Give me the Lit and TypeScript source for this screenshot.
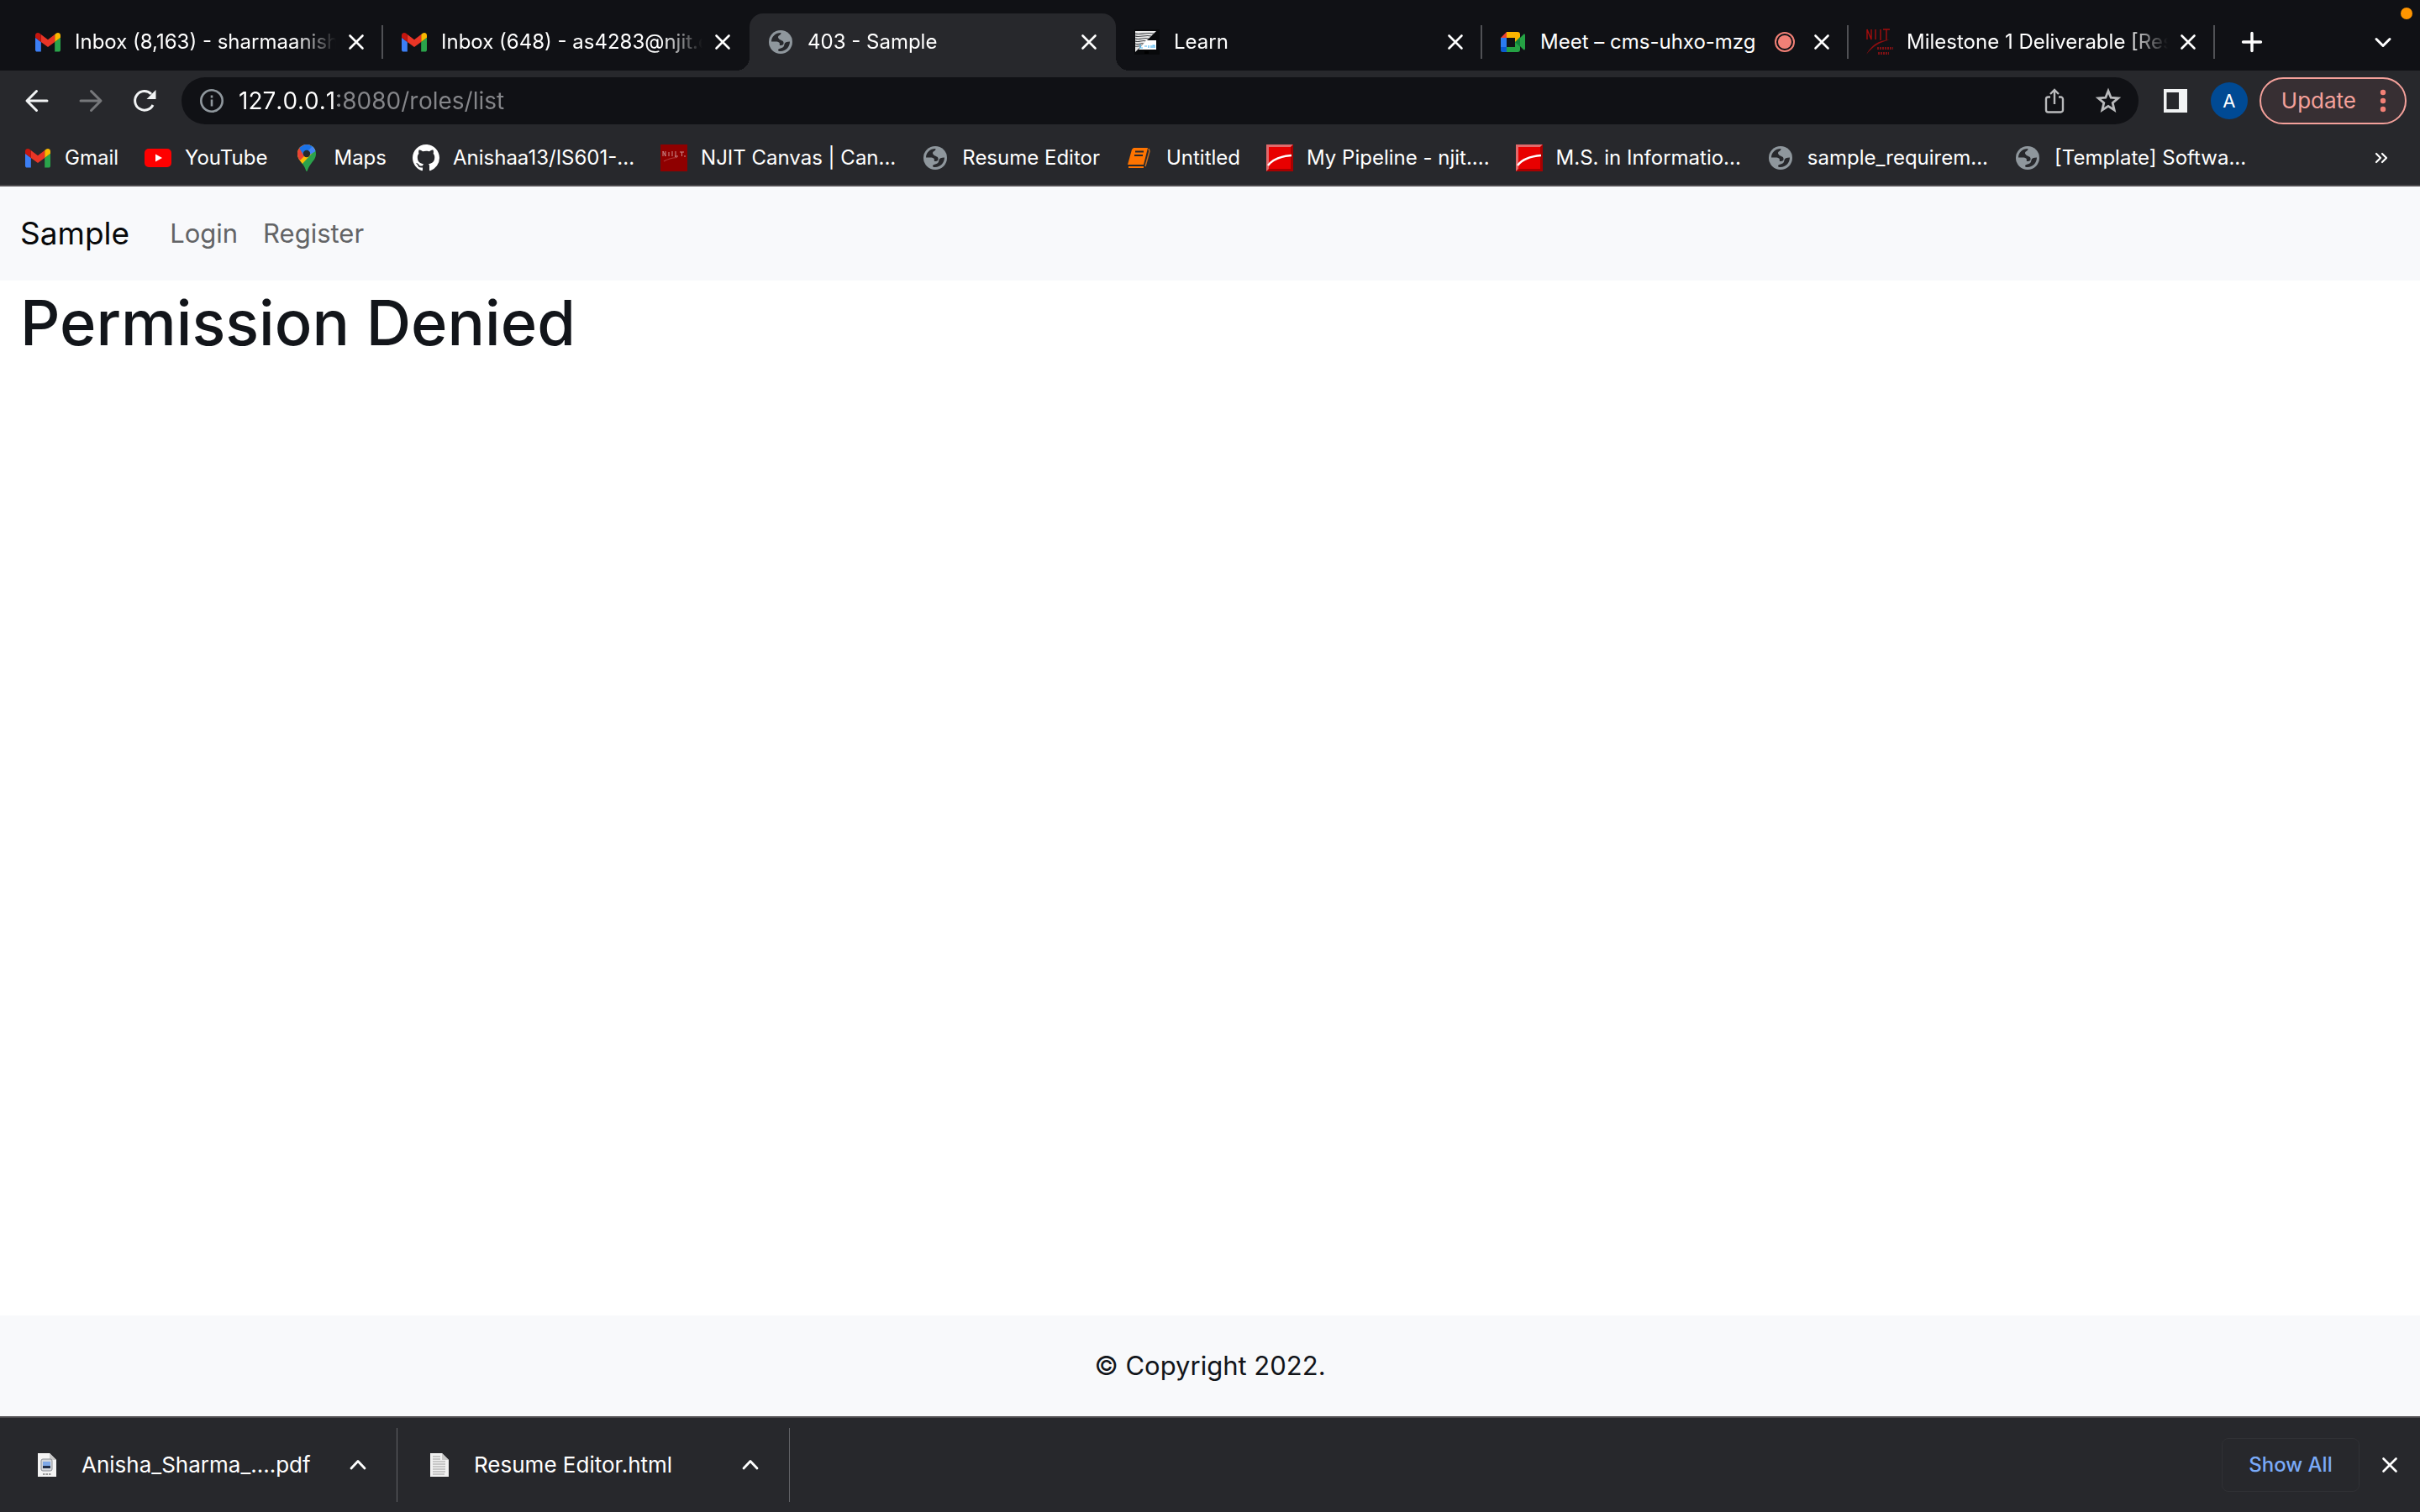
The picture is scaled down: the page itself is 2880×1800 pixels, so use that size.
import { LitElement, html, css, svg, TemplateResult } from "lit";
import { customElement, property } from "lit/decorators.js";
import { classMap } from "lit/directives/class-map.js";

type IconName =
  | "gmail" | "youtube" | "maps" | "github" | "canvas" | "globe" | "book" | "njit"
  | "learn" | "meet" | "njitLogo" | "record" | "close" | "plus" | "down" | "up"
  | "back" | "forward" | "reload" | "info" | "share" | "star" | "panel" | "dots"
  | "more" | "pdf" | "doc";

const line = (d: string, width: number, color = "currentColor") =>
  svg`<path d=${d} fill="none" stroke=${color} stroke-width=${width} stroke-linecap="round" stroke-linejoin="round"/>`;

/* Every glyph is drawn on a 32 x 32 grid. */
const glyphs: Record<IconName, TemplateResult> = {
  gmail: svg`<g transform="translate(1 5) scale(.341) translate(-52 -42)">
    <path fill="#3c7ff5" d="M58 108h14V74L52 59v43c0 3.320 2.690 6 6 6"/>
    <path fill="#2aa44b" d="M120 108h14c3.320 0 6-2.690 6-6V59l-20 15"/>
    <path fill="#fbb800" d="M120 48v26l20-15v-8c0-7.420-8.470-11.650-14.400-7.200"/>
    <path fill="#e93526" d="M72 74V48l24 18 24-18v26L96 92"/>
    <path fill="#c5160f" d="M52 51v8l20 15V48l-5.600-4.200c-5.940-4.450-14.400-.220-14.400 7.200"/></g>`,
  youtube: svg`<rect x="0" y="5" width="32" height="22" rx="5" fill="#f00"/><path d="M13 11.500v9l8-4.500z" fill="#fff"/>`,
  maps: svg`<clipPath id="pin"><path d="M16 0C9.500 0 5 5 5 11c0 5 2.500 7.500 5.500 11.500C13.500 26.500 14.500 29 15.200 31.200c.3 1 1.300 1 1.600 0C17.500 29 18.500 26.500 21.500 22.500 24.500 18.500 27 16 27 11 27 5 22.500 0 16 0z"/></clipPath>
    <g clip-path="url(#pin)"><rect width="32" height="32" fill="#2ba24c"/>
    <path d="M0 0h32L8 26H0z" fill="#fbbc04"/>
    <path d="M0 0h22l-9 14-5 5-8-6z" fill="#ea4335"/>
    <path d="M7 4L16 -2h14L13 14z" fill="#1a73e8"/>
    <path d="M18 -2h12v8l-10 6-5-2 9-9z" fill="#4285f4"/></g><circle cx="16" cy="11" r="4.200" fill="#27282c"/>`,
  github: svg`<path transform="scale(2)" fill="#fff" fill-rule="evenodd" d="M8 0C3.580 0 0 3.580 0 8c0 3.540 2.290 6.530 5.470 7.590.4.070.55-.17.55-.38 0-.19-.01-.82-.01-1.490-2.010.37-2.530-.49-2.690-.94-.09-.23-.48-.94-.82-1.130-.28-.15-.68-.52-.01-.53.63-.01 1.080.58 1.230.82.72 1.210 1.870.87 2.330.66.07-.52.28-.87.51-1.070-1.780-.2-3.640-.89-3.640-3.950 0-.87.31-1.590.82-2.150-.08-.2-.36-1.020.08-2.120 0 0 .67-.21 2.200.82.64-.18 1.320-.27 2-.27s1.360.09 2 .27c1.530-1.040 2.200-.82 2.200-.82.44 1.100.16 1.920.08 2.120.51.56.82 1.270.82 2.150 0 3.070-1.870 3.750-3.650 3.950.29.25.54.73.54 1.480 0 1.070-.01 1.930-.01 2.200 0 .21.15.46.55.38A8.010 8.010 0 0 0 16 8c0-4.420-3.580-8-8-8z"/>`,
  canvas: svg`<rect width="32" height="32" fill="#8f0000"/>
    <path d="M3 14V8l3 6V8M10 9v5M14 8v6M18 8v7M21 14h-4M23 9h5M25.500 9v5M28 14h2" stroke="#c98a8a" stroke-width="1" fill="none"/>
    <path d="M4 20C9 17 14 16 20 15.500" stroke="#b03a3a" stroke-width="1.200" fill="none"/>`,
  globe: svg`<circle cx="16" cy="16" r="14" fill="#8f979d"/>
    <g class="cut"><path d="M5 15.500C5 10 9.500 5 16.500 5c.2 2-1.500 2.500-3 3.800-1 1.200-.4 2.700.7 3.700 1 .8 2.300 1 3 1.800 2 .4 2.800 2.200 2.200 4.200-.5 1-2.400 1.500-4.400 1.500-.6-1.300.4-2-.6-3.200-1-1.100-2.400-1.300-4.400-1.300z"/>
    <path d="M27 15.500C27 22 22 27 16 27c-1.800 0-3-.5-3-1.500.4-1.500 2.500-1.500 4.500-2.400 2.200-.8 2.700-2.600 3-4.600.4-2 2.500-3 6.500-3z"/></g>
    <path d="M18 6.500c2 0 4 1.200 4.800 3-1 1.800-1.800 3-4 3.500-1.600.2-2.400-.5-2-2 .2-1.800 1-2.500 1.200-4.500z" fill="#8f979d"/>`,
  book: svg`<path d="M9 4h17l-5 20H2L7 6z" fill="#ff7400"/><path d="M27 5l1 3-5 18" stroke="#c66a1c" stroke-width="1.500" fill="none"/><path d="M3 27h18" stroke="#ff7400" stroke-width="2"/><path d="M11 8.500h10M10 13h10" stroke="#27282c" stroke-width="2"/><path d="M3 25h19" stroke="#27282c" stroke-width="1.500"/>`,
  njit: svg`<rect width="32" height="32" fill="#e80000"/><path d="M0 0h32l-3 3H3v27l-3 2z" fill="#e2696b"/><path d="M32 0v32H0l3-3h26V3z" fill="#a80000"/>
    <path d="M2 25C8 17 17 14 30 13" stroke="#fff" stroke-width="2.400" fill="none"/>`,
  learn: svg`<rect x="1" y="1" width="30" height="30" fill="#08090b"/><path d="M2 3h25L2 28z" fill="#e9e9e9"/>
    <path d="M2 6c6 2 12-2 22 0M2 9c6 2 12-2 19 0M2 12c6 2 10-2 16 0M2 15c5 2 8-2 13 0M2 18c4 2 6-1 10 0M2 21c3 1 5-1 7 0" stroke="#44474b" stroke-width="1.200" fill="none"/>
    <path d="M15 14h12v11H6z" fill="#fff"/><path d="M8 19v4h3M13 21h3M18 20v3M21 23v-3M23 23v-3h2v3" stroke="#4db5ee" stroke-width="1.200" fill="none"/><path d="M13 27h5v3h-5z" fill="#000"/>`,
  meet: svg`<path d="M1 11l7-7v7z" fill="#ea4335"/><path d="M1 11h7v11H1z" fill="#2b7bf0"/><path d="M1 22h7v6H3a2 2 0 0 1-2-2z" fill="#0b5bd0"/>
    <path d="M8 4h13a3 3 0 0 1 3 3v9h-6v-5H8z" fill="#fbb400"/><path d="M8 22h10v-6h6v9a3 3 0 0 1-3 3H8z" fill="#25a244"/>
    <path d="M18 16l6-6v12z" fill="#11803a"/><path d="M24 11l4-4c1-.8 2-.4 2 1v16c0 1.400-1 1.800-2 1l-4-4z" fill="#25a244"/>`,
  njitLogo: svg`<path d="M1 13V1l5 12V1M11 1v12M17 1v13M20 1h8M24 1v13" stroke="#a30d0d" stroke-width="1.400" fill="none"/>
    <path d="M0 31C6 20 14 13.500 28 13.500 16 16 8 21 0 31z" fill="#8d0e10"/>
    <path d="M13 23.500h19M14 29.500h13" stroke="#7c1114" stroke-width="3" stroke-dasharray="2 1"/>`,
  record: svg`<circle cx="16" cy="16" r="11" fill="none" stroke="#f28076" stroke-width="2"/><circle cx="16" cy="16" r="8" fill="#f28076"/>`,
  close: line("M8.500 8.500l15 15M23.500 8.500l-15 15", 2.6),
  plus: line("M16 5.500v21M5.500 16h21", 3.4),
  down: line("M8 12.500l8 8 8-8", 3),
  up: line("M8 20l8-8.500 8 8.500", 2.8),
  back: line("M28 16H4.500M15.500 4.500L4 16l11.500 11.500", 3),
  forward: line("M4 16h23.500M16.500 4.500L28 16 16.500 27.500", 3),
  reload: svg`<path d="M26 21A11.300 11.300 0 1 1 24 8" fill="none" stroke="currentColor" stroke-width="3"/><path d="M29.500 3v11H18.500z" fill="currentColor"/>`,
  info: svg`<circle cx="16" cy="16" r="12.700" fill="none" stroke="currentColor" stroke-width="2.600"/><path d="M16 14.500v8M16 9.500v3" stroke="currentColor" stroke-width="2.600"/>`,
  share: svg`<path d="M11 11.500H8.500a2.500 2.500 0 0 0-2.500 2.500v13a2.500 2.500 0 0 0 2.500 2.500h15a2.500 2.500 0 0 0 2.500-2.500V14a2.500 2.500 0 0 0-2.500-2.500H21M16 20V3.500M11 8l5-5 5 5" fill="none" stroke="currentColor" stroke-width="2.400"/>`,
  star: svg`<path d="M16 4.200l3.200 8 8.600.7-6.600 5.600 2 8.400L16 22.400l-7.200 4.500 2-8.400-6.600-5.600 8.600-.7z" fill="none" stroke="currentColor" stroke-width="2.800"/>`,
  panel: svg`<path d="M2 2h28v28H2z" fill="currentColor"/><path d="M5.500 6H20v20H5.500z" fill="#27282c"/>`,
  dots: svg`<circle cx="16" cy="6" r="3.200" fill="currentColor"/><circle cx="16" cy="16" r="3.200" fill="currentColor"/><circle cx="16" cy="26" r="3.200" fill="currentColor"/>`,
  more: line("M10 11l5 5-5 5M17 11l5 5-5 5", 2.2),
  pdf: svg`<path d="M5 2h14l8 8v20H5z" fill="#f4f4f4"/><path d="M19 2l8 8h-8z" fill="#c9c9c9"/><rect x="9" y="9" width="13" height="14" rx="2" fill="#d5d8dc" stroke="#8b8f95"/><rect x="11" y="12" width="9" height="5" fill="#7fa9e8"/><path d="M11 17h9v3h-9z" fill="#22304a"/><path d="M11 27h10" stroke="#9a9a9a" stroke-width="2" stroke-dasharray="2.500 1"/>`,
  doc: svg`<path d="M5 2h14l8 8v20H5z" fill="#f1f1f1"/><path d="M19 2l8 8h-8z" fill="#c9c9c9"/><path d="M8 6h9M8 9h9M8 12h15M8 15h15M8 18h15M8 21h15M8 24h15M8 27h14" stroke="#b9b9b9" stroke-width="1.300"/>`,
};

@customElement("ui-icon")
class UiIcon extends LitElement {
  @property() name: IconName = "globe";

  static styles = css`
    :host { display: inline-flex; flex: none; width: 32px; height: 32px; }
    svg { width: 100%; height: 100%; }
    .cut { fill: #27282c; }
  `;

  render() {
    return html`<svg viewBox="0 0 32 32" aria-hidden="true">${glyphs[this.name]}</svg>`;
  }
}

interface Tab { icon: IconName; title: string; active?: boolean; recording?: boolean; divider?: boolean }
interface Bookmark { icon: IconName; label: string }
interface Download { icon: IconName; file: string }

const tabs: Tab[] = [
  { icon: "gmail", title: "Inbox (8,163) - sharmaanish", divider: true },
  { icon: "gmail", title: "Inbox (648) - as4283@njit.e" },
  { icon: "globe", title: "403 - Sample", active: true },
  { icon: "learn", title: "Learn", divider: true },
  { icon: "meet", title: "Meet – cms-uhxo-mzg", recording: true, divider: true },
  { icon: "njitLogo", title: "Milestone 1 Deliverable [Res", divider: true },
];

const bookmarks: Bookmark[] = [
  { icon: "gmail", label: "Gmail" },
  { icon: "youtube", label: "YouTube" },
  { icon: "maps", label: "Maps" },
  { icon: "github", label: "Anishaa13/IS601-..." },
  { icon: "canvas", label: "NJIT Canvas | Can..." },
  { icon: "globe", label: "Resume Editor" },
  { icon: "book", label: "Untitled" },
  { icon: "njit", label: "My Pipeline - njit...." },
  { icon: "njit", label: "M.S. in Informatio..." },
  { icon: "globe", label: "sample_requirem..." },
  { icon: "globe", label: "[Template] Softwa..." },
];

const downloads: Download[] = [
  { icon: "pdf", file: "Anisha_Sharma_....pdf" },
  { icon: "doc", file: "Resume Editor.html" },
];

@customElement("app-root")
class AppRoot extends LitElement {
  static styles = css`
    :host {
      display: flex;
      flex-direction: column;
      min-height: 100vh;
      background: #fff;
      color: #12151a;
      font-family: Inter, "Liberation Sans", sans-serif;
      font-size: 24px;
      line-height: 32px;
    }
    * { box-sizing: border-box; }
    button {
      display: inline-flex;
      align-items: center;
      justify-content: center;
      flex: none;
      margin: 0;
      padding: 0;
      border: 0;
      background: none;
      color: inherit;
      font: inherit;
    }
    a { color: inherit; text-decoration: none; }
    .icon-button { width: 48px; height: 48px; }

    .tab-strip {
      position: relative;
      display: flex;
      align-items: stretch;
      padding: 16px 24px 0 20px;
      background: #101115;
      color: #fff;
    }
    .tab {
      position: relative;
      display: flex;
      align-items: center;
      flex: 0 1 436px;
      min-width: 0;
      height: 68px;
      padding-left: 21px;
    }
    .tab.active { border-radius: 16px 16px 0 0; background: #27282c; }
    .tab.active::before, .tab.active::after {
      content: "";
      position: absolute;
      bottom: 0;
      width: 16px;
      height: 16px;
    }
    .tab.active::before { right: 100%; background: radial-gradient(circle at 0 0, transparent 16px, #27282c 16px); }
    .tab.active::after { left: 100%; background: radial-gradient(circle at 100% 0, transparent 16px, #27282c 16px); }
    .tab-title {
      flex: 1;
      min-width: 0;
      margin: 0 8px 0 16px;
      overflow: hidden;
      white-space: nowrap;
      -webkit-mask-image: linear-gradient(to left, transparent, #000 48px);
      mask-image: linear-gradient(to left, transparent, #000 48px);
    }
    .recording .tab-title { margin-right: 4px; overflow: visible; -webkit-mask-image: none; mask-image: none; }
    .record { margin-right: 12px; }
    .tab-close { width: 32px; height: 32px; margin-right: 14px; }
    .divider { width: 2px; height: 40px; }
    .divider.shown { background: #505155; }
    .strip-button { width: 40px; }
    .new-tab { margin-left: 24px; }
    .tab-search { margin-left: auto; }
    .camera-dot {
      position: absolute;
      top: 9px;
      right: 9px;
      width: 14px;
      height: 14px;
      border-radius: 50%;
      background: #ff9500;
    }

    .toolbar {
      display: flex;
      align-items: center;
      height: 72px;
      padding: 0 16px 0 20px;
      background: #27282c;
      color: #f1f3f4;
    }
    .history { display: flex; gap: 16px; }
    .history button:disabled { color: #77787b; }
    .address {
      display: flex;
      align-items: center;
      flex: 1;
      min-width: 0;
      height: 56px;
      margin: 0 20px;
      padding: 0 12px 0 20px;
      border-radius: 28px;
      background: #101115;
      color: #b9babc;
    }
    .address .site-info { color: #8f979d; }
    .url {
      flex: 1;
      min-width: 0;
      height: 40px;
      margin: 0 0 0 16px;
      padding: 0;
      border: 0;
      outline: 0;
      background: linear-gradient(to right, #fff 118px, #85868a 118px);
      -webkit-background-clip: text;
      background-clip: text;
      color: transparent;
      font: inherit;
      font-size: 28px;
      font-kerning: none;
    }
    .address-actions { display: flex; gap: 16px; }
    .avatar {
      width: 44px;
      height: 44px;
      margin: 0 14px 0 18px;
      border-radius: 50%;
      background: #004a94;
      color: #fff;
      font-size: 22px;
    }
    .update {
      height: 56px;
      padding: 0 10px 0 24px;
      gap: 16px;
      border: 2px solid #f4a19b;
      border-radius: 28px;
      background: #372f33;
      color: #f4a19b;
      font-size: 26px;
    }
    .update ui-icon { color: #f28076; }

    .bookmarks {
      display: flex;
      align-items: center;
      height: 66px;
      padding: 0 30px 0 29px;
      border-bottom: 2px solid #4d4b4e;
      background: #27282c;
      color: #fff;
    }
    .bookmark-list { display: flex; flex: 1; gap: 31px; min-width: 0; margin: 0; padding: 0; list-style: none; }
    .bookmark { display: flex; align-items: center; gap: 16px; white-space: nowrap; }

    .site-nav {
      display: flex;
      align-items: center;
      height: 112px;
      padding: 0 24px;
      background: #f8f9fb;
      font-size: 31px;
    }
    .brand { margin-right: 48px; color: #08090a; font-size: 37px; line-height: 48px; }
    .nav-links { display: flex; gap: 30px; color: #636466; }
    main { flex: 1; padding: 0 24px; }
    h1 { margin: 0; font-size: 74px; font-weight: 500; line-height: 100px; }
    .site-footer {
      display: flex;
      align-items: center;
      justify-content: center;
      height: 120px;
      background: #f8f9fb;
      font-size: 31px;
    }

    .shelf {
      display: flex;
      align-items: center;
      height: 114px;
      padding: 0 12px 0 6px;
      border-top: 2px solid #4d4b4e;
      background: #27282c;
      color: #fff;
    }
    .download {
      display: flex;
      align-items: center;
      flex: 0 1 467px;
      height: 88px;
      padding: 0 30px 0 34px;
      border-right: 1px solid #626367;
      font-size: 26px;
    }
    .file { flex: 1; margin-left: 25px; white-space: nowrap; }
    .show-all {
      width: 164px;
      height: 64px;
      margin: 0 12px 0 auto;
      border: 1px solid #303135;
      border-radius: 8px;
      color: #7aaaf8;
      font-weight: 500;
    }
  `;

  private renderTab(tab: Tab) {
    return html`
      <div class=${classMap({ tab: true, active: !!tab.active, recording: !!tab.recording })} role="tab" aria-selected=${tab.active ? "true" : "false"}>
        <ui-icon name=${tab.icon}></ui-icon>
        <span class="tab-title">${tab.title}</span>
        ${tab.recording ? html`<ui-icon class="record" name="record"></ui-icon>` : null}
        <button class="tab-close" aria-label="Close tab"><ui-icon name="close"></ui-icon></button>
        <span class=${classMap({ divider: true, shown: !!tab.divider })}></span>
      </div>`;
  }

  render() {
    return html`
      <div class="tab-strip" role="tablist">
        ${tabs.map((tab) => this.renderTab(tab))}
        <button class="strip-button new-tab" aria-label="New tab"><ui-icon name="plus"></ui-icon></button>
        <button class="strip-button tab-search" aria-label="Search tabs"><ui-icon name="down"></ui-icon></button>
        <span class="camera-dot"></span>
      </div>

      <div class="toolbar">
        <div class="history">
          <button class="icon-button" aria-label="Back"><ui-icon name="back"></ui-icon></button>
          <button class="icon-button" aria-label="Forward" disabled><ui-icon name="forward"></ui-icon></button>
          <button class="icon-button" aria-label="Reload"><ui-icon name="reload"></ui-icon></button>
        </div>
        <div class="address">
          <ui-icon class="site-info" name="info"></ui-icon>
          <input class="url" type="text" aria-label="Address" .value=${"127.0.0.1:8080/roles/list"} />
          <div class="address-actions">
            <button class="icon-button" aria-label="Share"><ui-icon name="share"></ui-icon></button>
            <button class="icon-button" aria-label="Bookmark this page"><ui-icon name="star"></ui-icon></button>
          </div>
        </div>
        <button class="icon-button" aria-label="Side panel"><ui-icon name="panel"></ui-icon></button>
        <button class="avatar" aria-label="Profile">A</button>
        <button class="update">Update<ui-icon name="dots"></ui-icon></button>
      </div>

      <nav class="bookmarks" aria-label="Bookmarks">
        <ul class="bookmark-list">
          ${bookmarks.map((b) => html`<li><a class="bookmark" href="#"><ui-icon name=${b.icon}></ui-icon>${b.label}</a></li>`)}
        </ul>
        <button aria-label="More bookmarks"><ui-icon name="more"></ui-icon></button>
      </nav>

      <nav class="site-nav" aria-label="Site">
        <a class="brand" href="#">Sample</a>
        <div class="nav-links"><a href="#">Login</a><a href="#">Register</a></div>
      </nav>
      <main><h1>Permission Denied</h1></main>
      <footer class="site-footer">© Copyright 2022.</footer>

      <div class="shelf">
        ${downloads.map((d) => html`
          <div class="download">
            <ui-icon name=${d.icon}></ui-icon>
            <span class="file">${d.file}</span>
            <button aria-label="Download options"><ui-icon name="up"></ui-icon></button>
          </div>`)}
        <button class="show-all">Show All</button>
        <button class="icon-button" aria-label="Close downloads bar"><ui-icon name="close"></ui-icon></button>
      </div>`;
  }
}
